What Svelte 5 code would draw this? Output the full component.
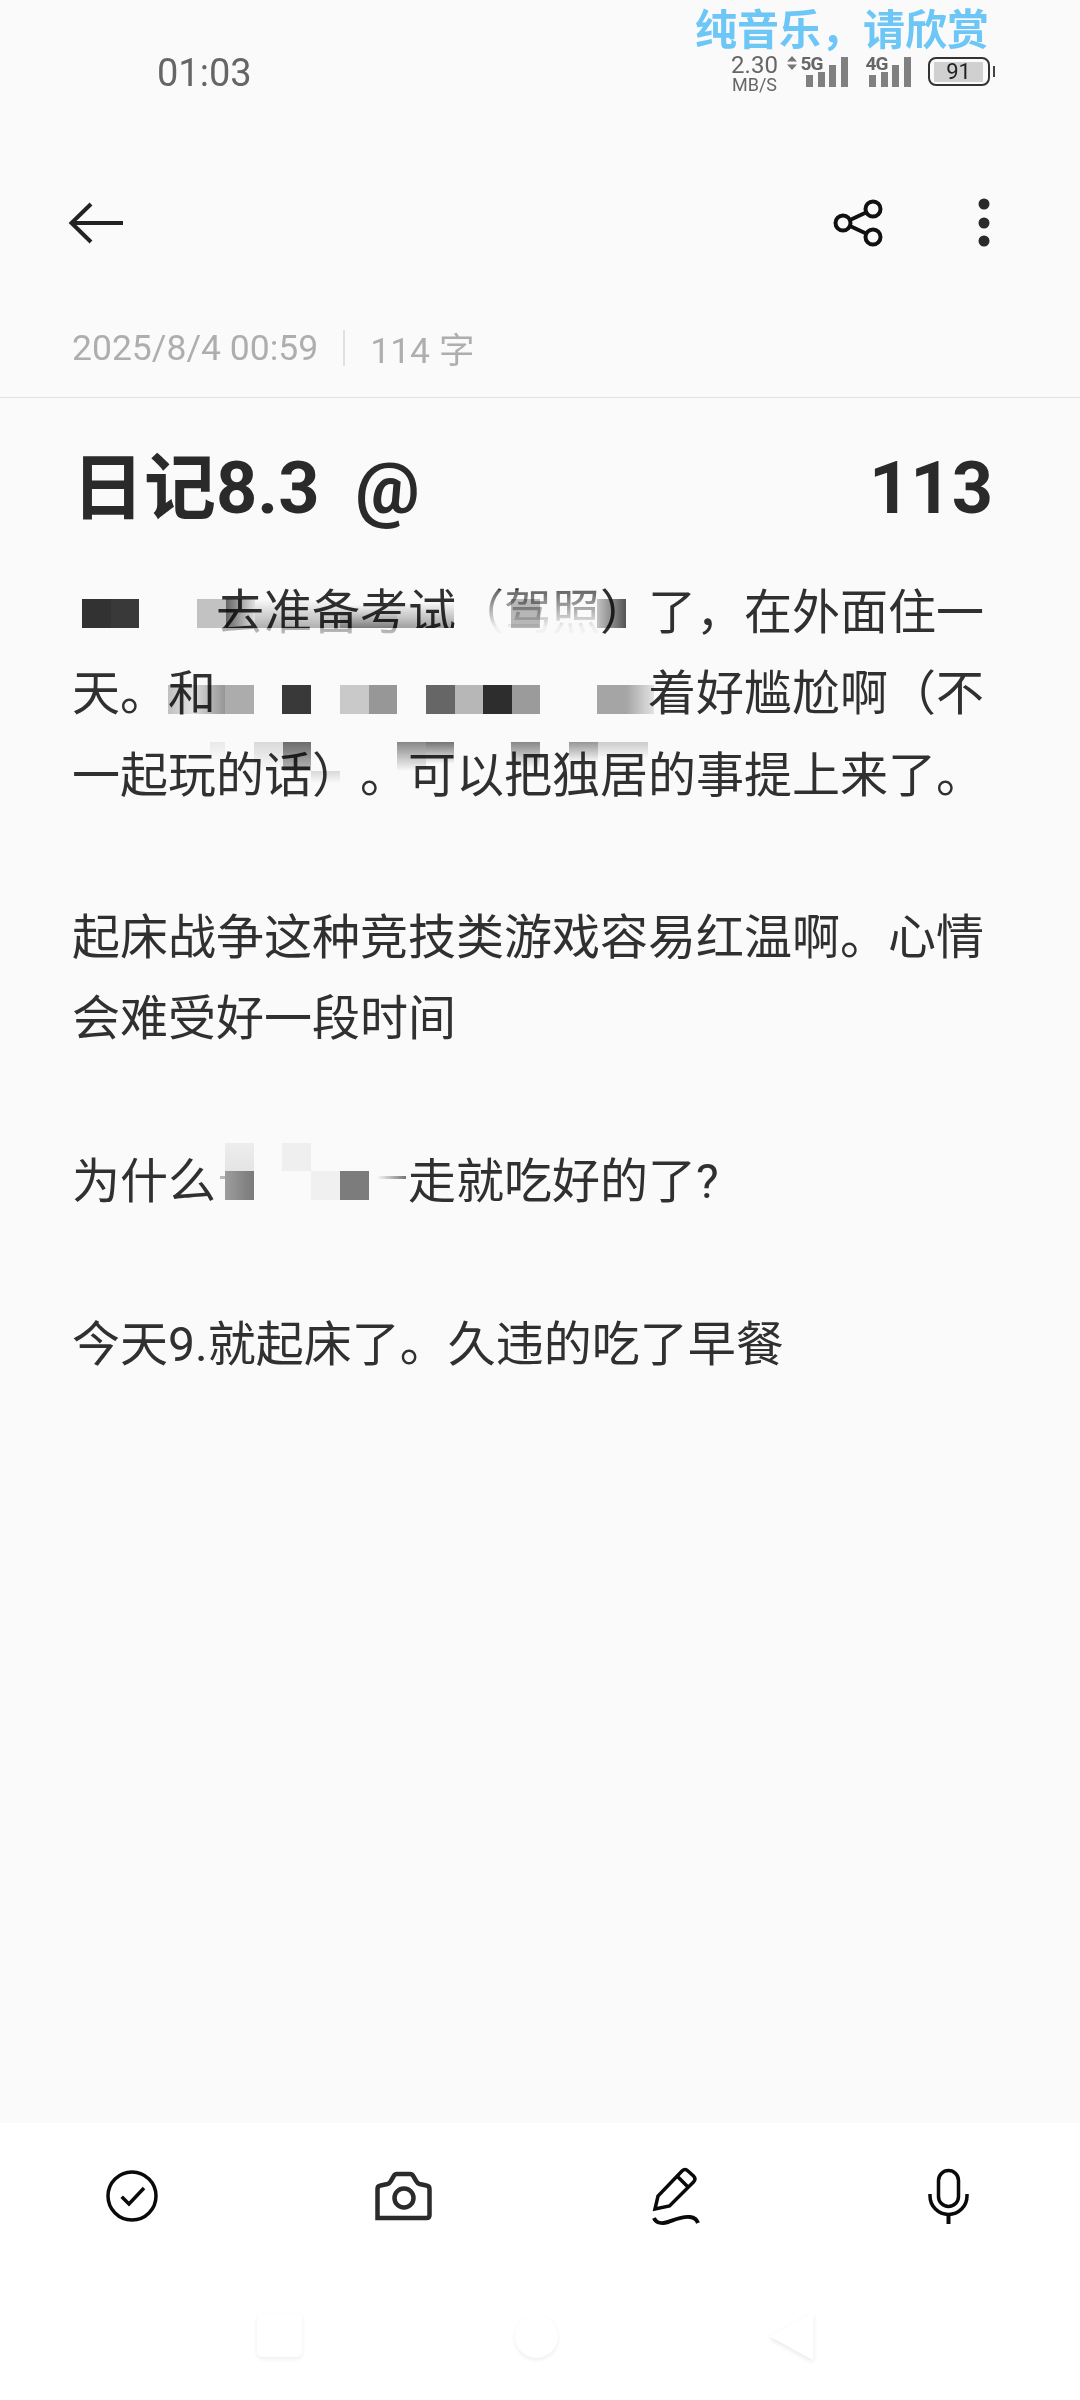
<script>
	const g = 28.7

	// pale washes that lie over the text
	const veils = [
		[220, 628, 260, 24, 'linear-gradient(rgba(250,250,250,.6),#fafafa)'],
		[397, 628, 60, 24, '#fafafa'],
		[480, 590, 120, 62, 'linear-gradient(rgba(250,250,250,.25),rgba(250,250,250,.95) 60%,#fafafa)']
	]

	// mosaic tiles, multiplied on to whatever is beneath: x, y, w, h, fill
	const tiles = [
		[82, 599, g, 29, '#333'],
		[110.7, 599, g, 29, '#3a3a3a'],
		[197, 599, g, 29, '#c6c6c6'],
		[226, 599, g, 29, 'linear-gradient(to right,#666,#e6e6e6)'],
		[255, 599, 85, 29, 'linear-gradient(transparent,#b4b4b4)'],
		[340, 599, 57, 29, 'linear-gradient(transparent 20%,#808080)'],
		[397, 599, 57, 29, 'linear-gradient(transparent 10%,#a4a4a4)'],
		[511, 599, g, 29, '#bbb'],
		[597, 599, g, 29, 'linear-gradient(to right,#c8c8c8,#555)'],

		[168, 685, 26, 28.7, 'linear-gradient(to right,#c4c4c4,#e8e8e8)'],
		[194, 685, 31, 28.7, 'linear-gradient(to right,#ddd,#999)'],
		[225, 685, g, 28.7, '#b0b0b0'],
		[282, 685, g, 28.7, '#3a3a3a'],
		[340, 685, g, 28.7, '#cdcdcd'],
		[368.7, 685, g, 28.7, '#9a9a9a'],
		[426, 685, g, 28.7, '#686868'],
		[454.7, 685, g, 28.7, '#bbb'],
		[483, 685, g, 28.7, '#2e2e2e'],
		[511.7, 685, g, 28.7, '#9e9e9e'],
		[597, 685, g, 28.7, '#a8a8a8'],
		[625.7, 685, g, 28.7, 'linear-gradient(to right,#a8a8a8,#e8e8e8)'],

		[210, 742, 15, 20, 'linear-gradient(#eee,transparent)'],
		[254, 742, g, 29, 'linear-gradient(#dedede,transparent)'],
		[282.7, 742, g, 29, 'linear-gradient(#6e6e6e,#bdbdbd)'],
		[311, 771, g, 12, 'linear-gradient(#ddd,transparent)'],
		[397, 742, g, 29, 'linear-gradient(#8a8a8a,transparent)'],
		[425.7, 742, g, 22, 'linear-gradient(#777,transparent)'],
		[511, 742, g, 26, 'linear-gradient(#8a8a8a,transparent)'],
		[569, 742, g, 20, 'linear-gradient(#999,transparent)'],
		[597.7, 742, 50, 16, 'linear-gradient(#cfcfcf,transparent)'],

		[225, 1143, g, 28, 'linear-gradient(#f2f2f2,#e9e9e9)'],
		[282, 1143, g, 28, '#f4f4f4'],
		[225, 1171, g, 29, 'linear-gradient(to right,#a0a0a0,#7c7c7c)'],
		[311, 1171, g, 29, '#f5f5f5'],
		[340, 1171, g, 29, '#7e7e7e'],
		[377, 1176, 29, 3, 'linear-gradient(to right,transparent,#777)'],
		[220, 1176, 5, 3, '#bbb']
	]

	const place = ([x, y, w, h, bg]) =>
		`left:${x}px;top:${y}px;width:${w}px;height:${h}px;background:${bg}`
</script>

<div class="app" lang="zh-CN">
	<div class="lyric">纯音乐，请欣赏</div>

	<header class="status">
		<span class="time">01:03</span>
		<div class="indicators">
			<div class="speed">
				<span class="rate">2.30</span>
				<span class="unit">MB/S</span>
			</div>
			<div class="signal first">
				<svg class="updown" viewBox="0 0 10 14" width="10" height="14">
					<path d="M5 0 10 5.500H0ZM5 14 0 8.500H10Z" fill="#777" />
				</svg>
				<span class="net">5G</span>
				<svg class="bars" viewBox="0 0 42 30" width="42" height="30">
					<path d="M0 18h7v12H0zM12 15h7v15h-7zM23 8h7v22h-7zM35 0h7v30h-7z" fill="#808080" />
				</svg>
			</div>
			<div class="signal">
				<span class="net">4G</span>
				<svg class="bars" viewBox="0 0 42 30" width="42" height="30">
					<path d="M0 18h7v12H0zM12 15h7v15h-7zM23 8h7v22h-7zM35 0h7v30h-7z" fill="#808080" />
				</svg>
			</div>
			<div class="battery"><span class="level">91</span></div>
			<div class="nub"></div>
		</div>
	</header>

	<nav class="toolbar">
		<svg viewBox="0 0 60 60" width="60" height="60" fill="none" stroke="#222" stroke-width="4">
			<path d="M57 30H6M25 11 5.500 30 25 49" />
		</svg>
		<div class="actions">
			<svg viewBox="0 0 60 60" width="60" height="60" fill="none" stroke="#111" stroke-width="4">
				<circle cx="15" cy="30" r="7.500" />
				<circle cx="45" cy="16" r="7.500" />
				<circle cx="45" cy="44" r="7.500" />
				<path d="M22 27 38 19.500M22 33 38 40.500" />
			</svg>
			<svg viewBox="0 0 60 60" width="60" height="60" fill="#2a2a2a">
				<circle cx="30" cy="11" r="5.500" />
				<circle cx="30" cy="30" r="5.500" />
				<circle cx="30" cy="48" r="5.500" />
			</svg>
		</div>
	</nav>

	<div class="meta">
		<span class="stamp">2025/8/4 00:59</span>
		<span class="sep"></span>
		<span class="count">114 字</span>
	</div>

	<main class="note">
		<h1 class="title">
			<span>日记8.3  @</span>
			<span>113</span>
		</h1>
		<p class="body">
			<span class="gap" style="width:144px"></span>去准备考试（驾照）了，在外面住一<br />
			天。和<span class="gap" style="width:432px"></span>着好尴尬啊（不<br />
			一起玩的话）。可以把独居的事提上来了。<br />
			<br />
			起床战争这种竞技类游戏容易红温啊。心情<br />
			会难受好一段时间<br />
			<br />
			为什么<span class="gap" style="width:192px"></span>走就吃好的了?<br />
			<br />
			今天9.就起床了。久违的吃了早餐
		</p>
	</main>

	{#each veils as v}
		<div class="veil" style={place(v)}></div>
	{/each}
	{#each tiles as t}
		<div class="tile" style={place(t)}></div>
	{/each}

	<footer class="dock">
		<div class="tools">
			<svg viewBox="0 0 60 60" width="60" height="60" fill="none" stroke="#0a0a0a" stroke-width="3.500">
				<circle cx="30" cy="30" r="24" />
				<path d="M19.700 30.700 27 38 42 22" />
			</svg>
			<svg viewBox="0 0 60 60" width="60" height="60" fill="none" stroke="#2b2b2b" stroke-width="4.500">
				<path d="M3.500 52V23q0-3 3-3.500l7-1.500q2-.5 3-2.500l3-5q1-2.500 3.500-2.500h13q2.500 0 3.500 2.500l3 5q1 2 3 2.500l7 1.500q3 .5 3 3.500V49q0 3-3 3Z" />
				<circle cx="30" cy="32" r="9.500" />
			</svg>
			<svg viewBox="0 0 60 60" width="60" height="60" fill="none" stroke="#0a0a0a" stroke-width="3.500">
				<path d="M9 43 12 30 36 5q3-3 6 0l5.500 5q3 3 0 6L23.500 40Z" />
				<path d="M32 11 42 21" />
				<path d="M8 52c2 5 8 6 14 4s14-6 22-5c4 .5 7 3 8 6" stroke-width="4" />
			</svg>
			<svg viewBox="0 0 60 60" width="60" height="60" fill="none" stroke="#0a0a0a" stroke-width="3.500">
				<rect x="20.500" y="4.500" width="20" height="36" rx="10" />
				<path d="M12 28v2a18.500 18.500 0 0 0 37 0v-2" />
				<path d="M30.500 48v10" stroke-width="4" />
			</svg>
		</div>
		<div class="keys">
			<div class="key square"></div>
			<div class="key round"></div>
			<svg class="key-back" viewBox="0 0 46 50" width="46" height="50">
				<path d="M43 3V46L3 24Z" fill="#fff" stroke="#fff" stroke-width="3" stroke-linejoin="round" />
			</svg>
		</div>
	</footer>
</div>

<style>
	:global(body) {
		background: #fafafa;
	}

	.app {
		position: relative;
		display: flex;
		flex-direction: column;
		width: 1080px;
		height: 2400px;
		overflow: hidden;
		background: #fafafa;
		color: #2a2a2a;
		font-family: Roboto, 'Noto Sans CJK SC', sans-serif;
		text-spacing-trim: space-all;
	}

	.lyric {
		position: absolute;
		left: 695px;
		top: 8px;
		color: #6cc6f6;
		font-size: 42px;
		font-weight: 700;
		line-height: 46px;
		white-space: nowrap;
	}

	.status {
		display: flex;
		justify-content: space-between;
		height: 130px;
		padding: 0 85px 0 157px;
	}

	.time {
		margin-top: 51px;
		color: #666;
		font-size: 38px;
		line-height: 44px;
	}

	.indicators {
		display: flex;
		align-items: flex-start;
		margin-top: 54px;
		color: #666;
	}

	.speed {
		display: flex;
		flex-direction: column;
		align-items: center;
		width: 50px;
	}

	.rate {
		font-size: 24px;
		line-height: 23px;
	}

	.unit {
		font-size: 18px;
		line-height: 15px;
	}

	.signal {
		position: relative;
		display: flex;
		align-items: flex-start;
		width: 45px;
		height: 34px;
		margin-left: 18px;
	}

	.signal.first {
		width: 61px;
		margin-left: 7px;
	}

	.updown {
		margin-top: 2px;
		margin-right: 4px;
		flex: none;
	}

	.net {
		position: relative;
		color: #666;
		font-size: 19px;
		font-weight: 700;
		line-height: 20px;
		letter-spacing: -1px;
	}

	.bars {
		position: absolute;
		right: 0;
		top: 3px;
	}

	.battery {
		display: flex;
		justify-content: center;
		align-items: center;
		box-sizing: border-box;
		width: 62px;
		height: 29px;
		margin-left: 17px;
		margin-top: 3px;
		border: 2.500px solid #333;
		border-radius: 8px;
		background: linear-gradient(#d0d0d0, #d0d0d0) center / 49px 20px no-repeat;
	}

	.level {
		color: #222;
		font-size: 22px;
		line-height: 22px;
	}

	.nub {
		width: 2.500px;
		height: 11px;
		margin: 12px 0 0 3px;
		background: #444;
	}

	.toolbar {
		display: flex;
		justify-content: space-between;
		align-items: center;
		height: 186px;
		padding: 0 66px;
	}

	.actions {
		display: flex;
		gap: 66px;
	}

	.meta {
		display: flex;
		align-items: center;
		box-sizing: border-box;
		height: 82px;
		padding: 0 72px 18px;
		border-bottom: 1.500px solid #e2e2e2;
		color: #aeaeae;
		font-size: 35.500px;
	}

	.sep {
		width: 2px;
		height: 36px;
		margin: 0 25px;
		background: #e0e0e0;
	}

	.title {
		display: flex;
		justify-content: space-between;
		margin: 0;
		padding: 46px 87px 0 72px;
		font-size: 72px;
		font-weight: 700;
		line-height: 90px;
		white-space: pre;
	}

	.body {
		margin: 38px 0 0 72px;
		color: #303030;
		font-size: 48px;
		font-weight: 400;
		line-height: 81.300px;
		white-space: nowrap;
	}

	.gap {
		display: inline-block;
	}

	.veil,
	.tile {
		position: absolute;
	}

	.tile {
		mix-blend-mode: multiply;
	}

	.dock {
		display: flex;
		flex-direction: column;
		margin-top: auto;
		height: 277px;
		background: #fff;
	}

	.tools {
		display: flex;
		justify-content: space-between;
		padding: 43px 102px 0;
	}

	.keys {
		position: relative;
		flex: 1;
	}

	.key {
		position: absolute;
		background: #fff;
		box-shadow: 0 2px 4px rgba(0, 0, 0, 0.07);
	}

	.square {
		left: 257px;
		top: 87px;
		width: 45px;
		height: 44px;
		border-radius: 5px;
	}

	.round {
		left: 515px;
		top: 89px;
		width: 43px;
		height: 43px;
		border-radius: 50%;
	}

	.key-back {
		position: absolute;
		left: 769px;
		top: 86px;
		filter: drop-shadow(0 2px 2px rgba(0, 0, 0, 0.09));
	}
</style>
